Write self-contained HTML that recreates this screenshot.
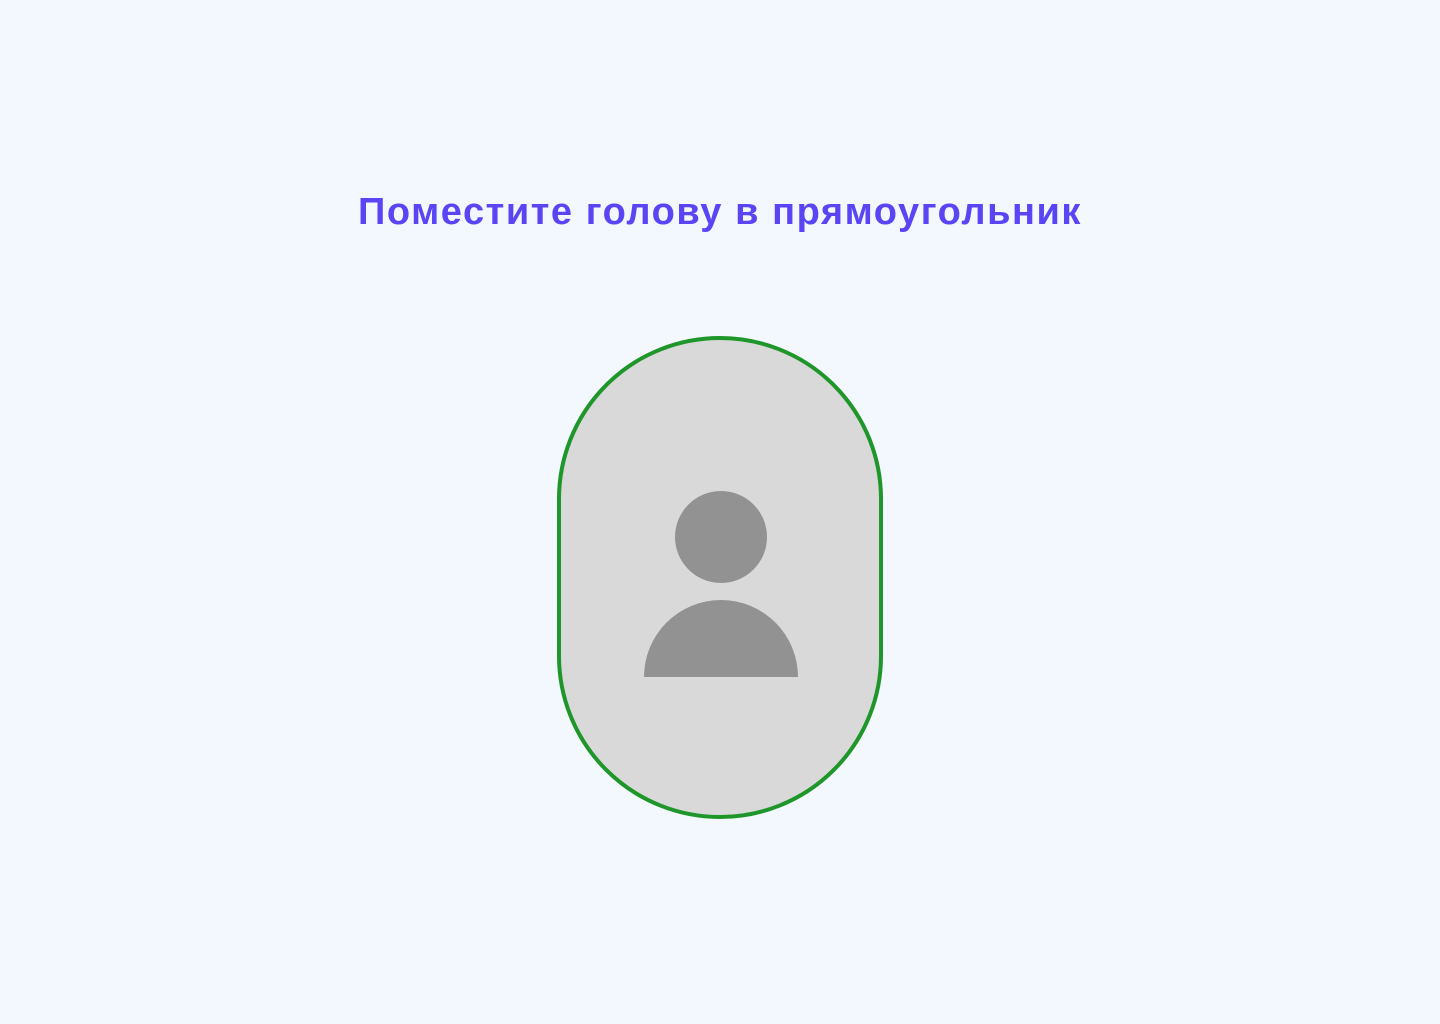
<!DOCTYPE html>
<html><head><meta charset="utf-8"><style>
html,body{margin:0;padding:0;width:1440px;height:1024px;background:#f3f7fe;overflow:hidden}
h1{position:absolute;left:0;width:1440px;top:188px;margin:0;text-align:center;font:bold 38px/48px "Liberation Sans",sans-serif;color:#5a45f5;letter-spacing:1.55px}
.cap{position:absolute;left:557px;top:336px;width:326px;height:483px;box-sizing:border-box;border:4px solid #1f962a;border-radius:163px;background:#d9d9d9}
</style></head><body>
<h1>Поместите голову в прямоугольник</h1>
<div class="cap"></div>
<svg style="position:absolute;left:0;top:0" width="1440" height="1024">
<circle cx="721" cy="537" r="46" fill="#929292"/>
<path d="M644 677 A77 77 0 0 1 798 677 Z" fill="#929292"/>
</svg>
</body></html>
